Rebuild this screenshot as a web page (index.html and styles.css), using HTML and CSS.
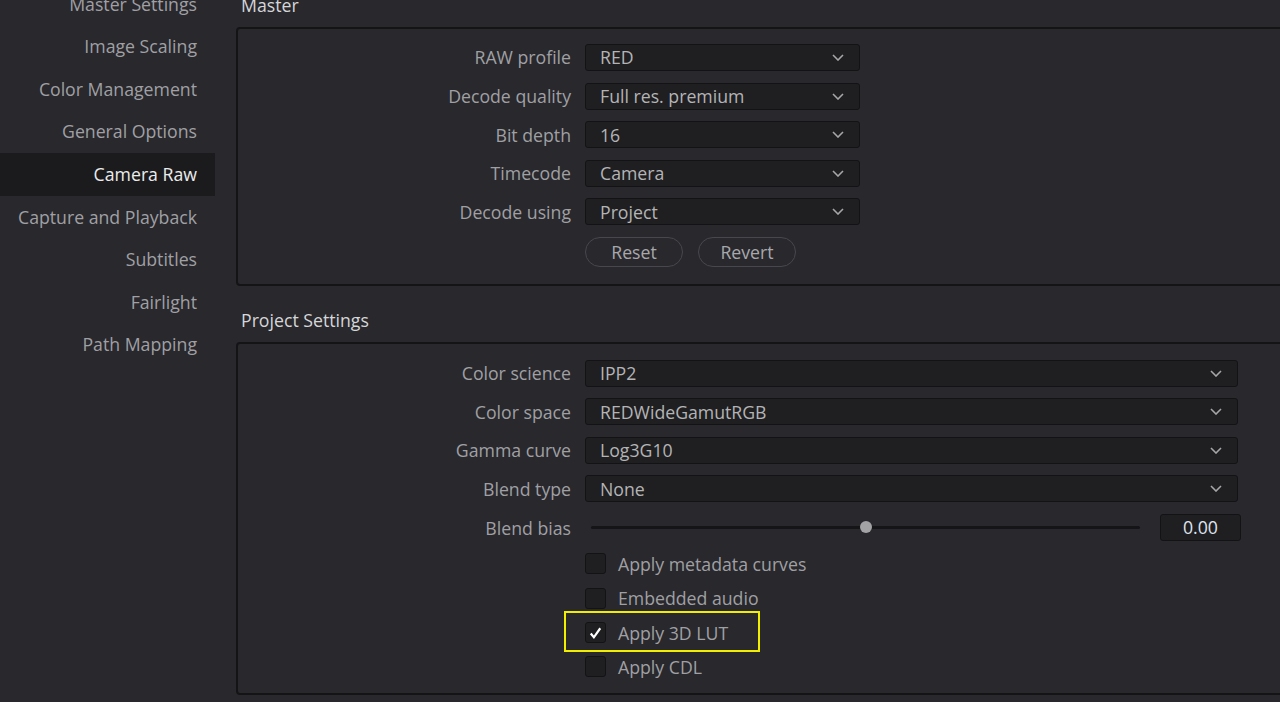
FILE: index.html
```html
<!DOCTYPE html>
<html lang="en">
<head>
    <meta charset="UTF-8">
    <meta name="viewport" content="width=device-width, initial-scale=1.0">
    <title>Camera Raw</title>
    <link rel="stylesheet" href="styles.css">
</head>
<body>
    <div class="page">
        <nav class="sidebar">
            <div class="nav-item">Master Settings</div>
            <div class="nav-item">Image Scaling</div>
            <div class="nav-item">Color Management</div>
            <div class="nav-item">General Options</div>
            <div class="nav-item active">Camera Raw</div>
            <div class="nav-item">Capture and Playback</div>
            <div class="nav-item">Subtitles</div>
            <div class="nav-item">Fairlight</div>
            <div class="nav-item">Path Mapping</div>
        </nav>

        <main class="content">
            <h3 class="group-title">Master</h3>
            <section class="panel master">
                <div class="row">
                    <span class="label">RAW profile</span>
                    <div class="select short"><span>RED</span><svg class="chev" width="12" height="7" viewBox="0 0 12 7"><path d="M1 1l5 5 5-5"/></svg></div>
                </div>
                <div class="row">
                    <span class="label">Decode quality</span>
                    <div class="select short"><span>Full res. premium</span><svg class="chev" width="12" height="7" viewBox="0 0 12 7"><path d="M1 1l5 5 5-5"/></svg></div>
                </div>
                <div class="row">
                    <span class="label">Bit depth</span>
                    <div class="select short"><span>16</span><svg class="chev" width="12" height="7" viewBox="0 0 12 7"><path d="M1 1l5 5 5-5"/></svg></div>
                </div>
                <div class="row">
                    <span class="label">Timecode</span>
                    <div class="select short"><span>Camera</span><svg class="chev" width="12" height="7" viewBox="0 0 12 7"><path d="M1 1l5 5 5-5"/></svg></div>
                </div>
                <div class="row">
                    <span class="label">Decode using</span>
                    <div class="select short"><span>Project</span><svg class="chev" width="12" height="7" viewBox="0 0 12 7"><path d="M1 1l5 5 5-5"/></svg></div>
                </div>
                <div class="buttons">
                    <button class="pill">Reset</button>
                    <button class="pill">Revert</button>
                </div>
            </section>

            <h3 class="group-title">Project Settings</h3>
            <section class="panel project">
                <div class="row">
                    <span class="label">Color science</span>
                    <div class="select long"><span>IPP2</span><svg class="chev" width="12" height="7" viewBox="0 0 12 7"><path d="M1 1l5 5 5-5"/></svg></div>
                </div>
                <div class="row">
                    <span class="label">Color space</span>
                    <div class="select long"><span>REDWideGamutRGB</span><svg class="chev" width="12" height="7" viewBox="0 0 12 7"><path d="M1 1l5 5 5-5"/></svg></div>
                </div>
                <div class="row">
                    <span class="label">Gamma curve</span>
                    <div class="select long"><span>Log3G10</span><svg class="chev" width="12" height="7" viewBox="0 0 12 7"><path d="M1 1l5 5 5-5"/></svg></div>
                </div>
                <div class="row">
                    <span class="label">Blend type</span>
                    <div class="select long"><span>None</span><svg class="chev" width="12" height="7" viewBox="0 0 12 7"><path d="M1 1l5 5 5-5"/></svg></div>
                </div>
                <div class="row">
                    <span class="label">Blend bias</span>
                    <div class="slider-group">
                        <div class="track"><div class="thumb"></div></div>
                        <div class="value">0.00</div>
                    </div>
                </div>

                <div class="check-row">
                    <span></span>
                    <div class="check"><span class="box"></span>Apply metadata curves</div>
                </div>
                <div class="check-row">
                    <span></span>
                    <div class="check"><span class="box"></span>Embedded audio</div>
                </div>
                <div class="check-row">
                    <span></span>
                    <div class="check highlight"><span class="box"><svg width="20" height="20" viewBox="0 0 20 20"><path d="M5 10.5l3.3 4L15 5"/></svg></span>Apply 3D LUT</div>
                </div>
                <div class="check-row">
                    <span></span>
                    <div class="check"><span class="box"></span>Apply CDL</div>
                </div>
            </section>
        </main>
    </div>
</body>
</html>
```

FILE: styles.css
```css
html, body {
    margin: 0;
    height: 100%;
    overflow: hidden;
}
body {
    background-color: #28282d;
    font-family: "Open Sans", "Noto Sans", sans-serif;
    font-size: 17.7px;
    color: #a0a0a4;
}
.page {
    display: flex;
}
.sidebar {
    width: 215px;
    flex-shrink: 0;
    margin-top: -17.3px;
}
.nav-item {
    height: 42.6px;
    line-height: 42.6px;
    text-align: right;
    padding-right: 18px;
    white-space: nowrap;
}
.nav-item.active {
    background-color: #1b1b1e;
    color: #ececec;
}
.content {
    flex: 1;
    padding-left: 21px;
    margin-right: -20px;
    margin-top: -6px;
}
.group-title {
    margin: 0 0 11px 5px;
    font-size: 17.7px;
    font-weight: normal;
    line-height: 22px;
    color: #d6d6d8;
}
.panel {
    border: 2px solid #141416;
    border-radius: 4px;
    margin-bottom: 23px;
}
.master {
    padding: 9.2px 0 17px 0;
}
.project {
    padding: 9.7px 0 9px 0;
}
.row {
    display: grid;
    grid-template-columns: 333px auto;
    column-gap: 14px;
    align-items: center;
    height: 38.6px;
}
.label {
    text-align: right;
    white-space: nowrap;
}
.select {
    height: 27px;
    box-sizing: border-box;
    border: 1px solid #131315;
    border-radius: 3px;
    background-color: #1f1f21;
    display: flex;
    align-items: center;
    justify-content: space-between;
    padding: 0 15px 0 14px;
    color: #b4b4b6;
}
.select.short {
    width: 275px;
}
.select.long {
    width: 653px;
}
.chev {
    fill: none;
    stroke: #a6a6a8;
    stroke-width: 1.6;
}
.buttons {
    display: flex;
    gap: 15px;
    margin: 6px 0 0 347px;
}
.pill {
    width: 98px;
    height: 30px;
    border: 1px solid #47474d;
    border-radius: 15px;
    background-color: transparent;
    color: #a8a8ac;
    font-family: inherit;
    font-size: 17.7px;
    padding: 0;
}
.slider-group {
    display: flex;
    align-items: center;
}
.track {
    width: 549px;
    height: 3px;
    margin-left: 6px;
    background-color: #151517;
    border-radius: 2px;
    position: relative;
}
.thumb {
    position: absolute;
    left: 269px;
    top: -5px;
    width: 12px;
    height: 12px;
    border-radius: 50%;
    background-color: #a3a3a5;
}
.value {
    width: 81px;
    height: 27px;
    box-sizing: border-box;
    margin-left: 20px;
    border: 1px solid #131315;
    border-radius: 3px;
    background-color: #1f1f21;
    color: #dfe3ee;
    text-align: center;
    line-height: 25px;
}
.check-row {
    display: grid;
    grid-template-columns: 333px auto;
    column-gap: 14px;
    align-items: center;
    height: 34.3px;
}
.check {
    display: flex;
    align-items: center;
    gap: 12px;
    white-space: nowrap;
}
.box {
    width: 21px;
    height: 21px;
    box-sizing: border-box;
    border: 1px solid #131315;
    border-radius: 3px;
    background-color: #1f1f21;
    display: flex;
}
.box svg {
    fill: none;
    stroke: #ffffff;
    stroke-width: 2.3;
}
.highlight {
    position: relative;
}
.highlight::after {
    content: "";
    position: absolute;
    left: -21px;
    top: -10px;
    width: 196px;
    height: 41px;
    box-sizing: border-box;
    border: 2px solid #f2ee00;
}
```
